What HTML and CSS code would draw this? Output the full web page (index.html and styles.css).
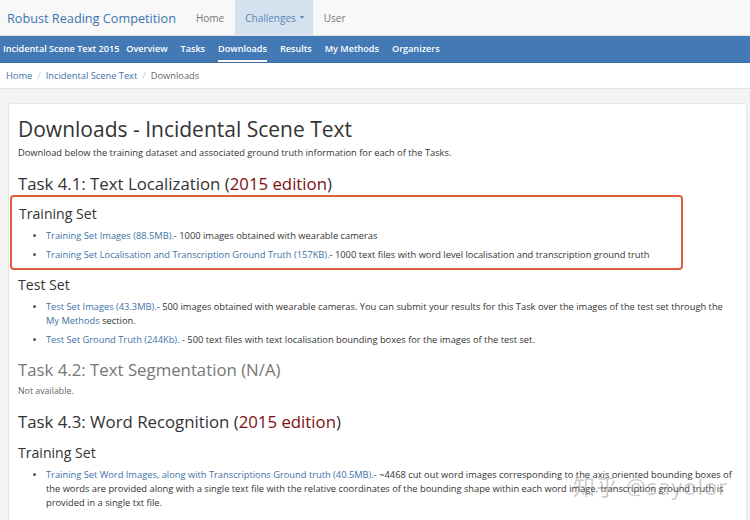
FILE: index.html
```html
<!DOCTYPE html>
<html>
<head>
<meta charset="utf-8">
<link rel="stylesheet" href="styles.css">
</head>
<body>
    <nav class="topbar">
        <a class="brand">Robust Reading Competition</a>
        <a class="top-link">Home</a>
        <a class="top-link active">Challenges <span class="caret"></span></a>
        <a class="top-link">User</a>
    </nav>
    <nav class="subbar">
        <a class="sub-title">Incidental Scene Text 2015</a>
        <a>Overview</a>
        <a>Tasks</a>
        <a class="current">Downloads</a>
        <a>Results</a>
        <a>My Methods</a>
        <a>Organizers</a>
    </nav>
    <div class="crumbs">
        <a>Home</a><span class="sep">/</span>
        <a>Incidental Scene Text</a><span class="sep">/</span>
        <span class="here">Downloads</span>
    </div>
    <main class="page">
        <div class="card">
            <h1>Downloads - Incidental Scene Text</h1>
            <p class="lead">Download below the training dataset and associated ground truth information for each of the Tasks.</p>

            <h2>Task 4.1: Text Localization (<span class="edition">2015 edition</span>)</h2>
            <section class="marked">
                <h3>Training Set</h3>
                <ul>
                    <li><a>Training Set Images (88.5MB).</a>- 1000 images obtained with wearable cameras</li>
                    <li><a>Training Set Localisation and Transcription Ground Truth (157KB).</a>- 1000 text files with word level localisation and transcription ground truth</li>
                </ul>
            </section>
            <h3 class="after-box">Test Set</h3>
            <ul>
                <li><a>Test Set Images (43.3MB).</a>- 500 images obtained with wearable cameras. You can submit your results for this Task over the images of the test set through the <a>My Methods</a> section.</li>
                <li><a>Test Set Ground Truth (244Kb).</a> - 500 text files with text localisation bounding boxes for the images of the test set.</li>
            </ul>

            <h2 class="muted">Task 4.2: Text Segmentation (N/A)</h2>
            <p class="note">Not available.</p>

            <h2>Task 4.3: Word Recognition (<span class="edition">2015 edition</span>)</h2>
            <h3 class="after-title">Training Set</h3>
            <ul>
                <li><a>Training Set Word Images, along with Transcriptions Ground truth (40.5MB).</a>- ~4468 cut out word images corresponding to the axis oriented bounding boxes of the words are provided along with a single text file with the relative coordinates of the bounding shape within each word image. transcription ground truth is provided in a single txt file.</li>
            </ul>
        </div>
    </main>
    <div class="watermark">知乎 @sayolor</div>
</body>
</html>
```

FILE: styles.css
```css
html, body {
    margin: 0;
    padding: 0;
}
body {
    width: 750px;
    height: 520px;
    overflow: hidden;
    position: relative;
    font-family: "Open Sans", "Noto Sans CJK SC", sans-serif;
    color: #333;
    background: #f3f3f3;
}
a {
    color: #3e72a6;
    text-decoration: none;
}

/* top navbar */
.topbar {
    display: flex;
    align-items: stretch;
    height: 35px;
    background: #f8f8f8;
    border-bottom: 1px solid #e4e4e4;
}
.brand {
    display: flex;
    align-items: center;
    padding: 0 9px 0 7px;
    font-size: 12.7px;
    color: #3a76b0;
}
.top-link {
    display: flex;
    align-items: center;
    padding: 0 11px;
    font-size: 10px;
    color: #777;
}
.top-link.active {
    background: #d4e1ef;
    color: #5a86b3;
    padding: 0 9px 0 10px;
}
.caret {
    display: inline-block;
    margin-left: 4px;
    border-top: 3px solid #5a86b3;
    border-left: 2.5px solid transparent;
    border-right: 2.5px solid transparent;
}

/* blue challenge bar */
.subbar {
    display: flex;
    align-items: stretch;
    height: 26px;
    background: #4379b5;
    border-bottom: 1px solid #3a6ca3;
    padding-left: 3px;
}
.subbar a {
    display: flex;
    align-items: center;
    color: #fff;
    font-size: 9.1px;
    font-weight: 600;
    margin-right: 13px;
    border-bottom: 2px solid transparent;
}
.subbar a.sub-title {
    margin-right: 7px;
}
.subbar a.current {
    border-bottom-color: #fff;
}

/* breadcrumb */
.crumbs {
    height: 25px;
    display: flex;
    align-items: center;
    padding-left: 6px;
    background: #fff;
    border-bottom: 1px solid #e2e2e2;
    font-size: 9.3px;
}
.crumbs .sep {
    color: #ccc;
    padding: 0 5px;
}
.crumbs .here {
    color: #666;
}

/* content */
.page {
    padding: 14px 3px 0 8px;
}
.card {
    background: #fff;
    border: 1px solid #e6e6e6;
    border-radius: 3px;
    padding: 11px 9px 0 9px;
    height: 420px;
}
h1 {
    font-size: 21px;
    font-weight: 400;
    margin: 0 0 3px 0;
    line-height: 28px;
}
.lead {
    font-size: 9.3px;
    line-height: 14px;
    margin: 0 0 13px 0;
}
h2 {
    font-size: 16.8px;
    font-weight: 400;
    margin: 0;
    line-height: 22px;
}
h2.muted {
    color: #777;
    margin-top: 12px;
}
.edition {
    color: #7d1010;
}
h3 {
    font-size: 14.1px;
    font-weight: 400;
    margin: 0;
    line-height: 20px;
}
h3.after-box {
    margin-top: 5px;
}
h3.after-title {
    margin-top: 10px;
}
ul {
    margin: 0;
    padding-left: 28px;
    font-size: 9.3px;
    line-height: 14px;
}
li {
    margin: 5px 0;
}
li::marker {
    font-size: 8px;
    color: #555;
}
.marked {
    border: 2px solid #e05d3c;
    border-radius: 4px;
    margin: 0 54px 0 -8px;
    padding: 7px 0 1px 7px;
}
.marked ul {
    padding-left: 27px;
}
.note {
    font-size: 8.8px;
    line-height: 14px;
    color: #666;
    margin: 3px 0 13px 0;
}
.watermark {
    position: absolute;
    left: 573px;
    top: 469px;
    font-size: 22px;
    color: rgba(140, 140, 140, 0.45);
    letter-spacing: 1px;
}
```
